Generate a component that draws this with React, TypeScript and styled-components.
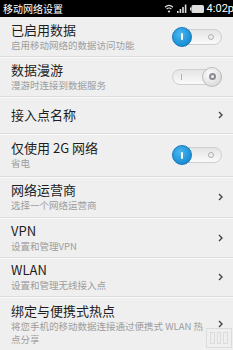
import React from 'react'
import styled, { createGlobalStyle } from 'styled-components'

const GlobalStyle = createGlobalStyle`
  html, body {
    margin: 0;
    padding: 0;
    background: #efefef;
  }
  body {
    font-family: 'Noto Sans CJK SC', 'Noto Sans', sans-serif;
  }
`

const Screen = styled.div`
  width: 233px;
  height: 350px;
  overflow: hidden;
  background: #efefef;
  position: relative;
`

const StatusBar = styled.div`
  height: 17px;
  background: #000;
  display: flex;
  align-items: center;
  padding: 0 0 0 3px;
  color: #fff;
`

const BarTitle = styled.div`
  font-size: 10px;
  line-height: 17px;
  flex: 1;
  white-space: nowrap;
`

const BarIcons = styled.div`
  display: flex;
  align-items: center;
  gap: 3px;
`

const Clock = styled.div`
  font-family: 'Roboto', 'Liberation Sans', sans-serif;
  font-size: 11px;
  white-space: nowrap;
  margin-right: -1px;
`

const Row = styled.div<{ h: number }>`
  height: ${({ h }) => h}px;
  box-sizing: border-box;
  display: flex;
  align-items: center;
  padding: 0 10px 0 11px;
  border-bottom: 1px solid #dcdcdc;
  box-shadow: 0 1px 0 #fafafa;
`

const Texts = styled.div`
  flex: 1;
  min-width: 0;
`

const Title = styled.div`
  font-size: 13px;
  line-height: 16px;
  color: #1e1e1e;
  white-space: nowrap;
`

const Sub = styled.div`
  font-size: 9.5px;
  line-height: 13px;
  color: #9d9d9d;
  margin-top: 1px;
`

const Chevron = styled.div`
  width: 10px;
  display: flex;
  justify-content: flex-end;
  margin-left: 4px;
`

const Track = styled.div`
  width: 50px;
  height: 16px;
  border-radius: 8px;
  background: linear-gradient(#e4e4e4, #fafafa);
  border: 1px solid #cfcfcf;
  box-sizing: border-box;
  position: relative;
  margin-right: 1px;
`

const Knob = styled.div<{ on: boolean }>`
  position: absolute;
  top: -3px;
  ${({ on }) => (on ? 'left: -1px;' : 'right: -1px;')}
  width: 20px;
  height: 20px;
  border-radius: 50%;
  background: ${({ on }) =>
    on
      ? 'radial-gradient(circle at 40% 35%, #4ab8f0, #1a8fd6 70%, #1379bd)'
      : 'radial-gradient(circle at 40% 35%, #fdfdfd, #dedede 70%, #c6c6c6)'};
  border: 1px solid ${({ on }) => (on ? '#1678b8' : '#bdbdbd')};
  box-sizing: border-box;
  display: flex;
  align-items: center;
  justify-content: center;
`

const KnobBar = styled.div`
  width: 2px;
  height: 7px;
  background: #fff;
  border-radius: 1px;
`

const KnobRing = styled.div`
  width: 7px;
  height: 7px;
  border-radius: 50%;
  border: 2px solid #8a8a92;
  box-sizing: border-box;
`

const TrackMark = styled.div<{ side: 'left' | 'right' }>`
  position: absolute;
  top: 4px;
  ${({ side }) => (side === 'left' ? 'left: 8px;' : 'right: 7px;')}
  ${({ side }) =>
    side === 'left'
      ? 'width: 1px; height: 6px; background: #b0b0b0;'
      : 'width: 6px; height: 6px; border-radius: 50%; border: 1px solid #b0b0b0; box-sizing: border-box;'}
`

const Watermark = styled.div`
  position: absolute;
  right: 1px;
  bottom: 2px;
  width: 26px;
  height: 20px;
  border: 1px solid #d8d8d8;
  box-sizing: border-box;
  display: flex;
  gap: 2px;
  padding: 3px;
  opacity: 0.8;
`

const WmCell = styled.div`
  flex: 1;
  border: 1px solid #d8d8d8;
`

const Toggle = ({ on }: { on: boolean }) => (
  <Track>
    <TrackMark side={on ? 'right' : 'left'} />
    <Knob on={on}>{on ? <KnobBar /> : <KnobRing />}</Knob>
  </Track>
)

const Arrow = () => (
  <Chevron>
    <svg width="5" height="8" viewBox="0 0 5 8">
      <path d="M1 1 L4 4 L1 7" fill="none" stroke="#444" strokeWidth="1.4" />
    </svg>
  </Chevron>
)

const Wifi = () => (
  <svg width="10" height="9" viewBox="0 0 10 9">
    <path d="M1 3.2 Q5 -0.4 9 3.2" fill="none" stroke="#ddd" strokeWidth="1.2" />
    <path d="M2.6 5 Q5 3 7.4 5" fill="none" stroke="#ddd" strokeWidth="1.2" />
    <circle cx="5" cy="7.5" r="1.1" fill="#ddd" />
  </svg>
)

const Signal = () => (
  <svg width="10" height="9" viewBox="0 0 10 9">
    <rect x="0" y="7" width="1.6" height="2" fill="#ddd" />
    <rect x="2.6" y="5" width="1.6" height="4" fill="#ddd" />
    <rect x="5.2" y="3" width="1.6" height="6" fill="#ddd" />
    <rect x="7.8" y="0.5" width="1.6" height="8.5" fill="#ddd" />
  </svg>
)

const Battery = () => (
  <svg width="14" height="8" viewBox="0 0 14 8">
    <rect x="1.5" y="0" width="12.5" height="8" rx="1.5" fill="#ddd" />
    <rect x="0" y="2.5" width="1.5" height="3" fill="#ddd" />
  </svg>
)

type Item = {
  title: string
  sub?: string
  h: number
  toggle?: boolean
}

const items: Item[] = [
  { title: '已启用数据', sub: '启用移动网络的数据访问功能', h: 40, toggle: true },
  { title: '数据漫游', sub: '漫游时连接到数据服务', h: 40, toggle: false },
  { title: '接入点名称', h: 37 },
  { title: '仅使用 2G 网络', sub: '省电', h: 43, toggle: true },
  { title: '网络运营商', sub: '选择一个网络运营商', h: 41 },
  { title: 'VPN', sub: '设置和管理VPN', h: 40 },
  { title: 'WLAN', sub: '设置和管理无线接入点', h: 39 },
  { title: '绑定与便携式热点', sub: '将您手机的移动数据连接通过便携式 WLAN 热点分享', h: 55 },
]

const App = () => {
  return (
    <Screen>
      <GlobalStyle />
      <StatusBar>
        <BarTitle>移动网络设置</BarTitle>
        <BarIcons>
          <Wifi />
          <Signal />
          <Battery />
          <Clock>4:02p</Clock>
        </BarIcons>
      </StatusBar>
      {items.map((item, index) => (
        <Row key={index} h={item.h}>
          <Texts>
            <Title>{item.title}</Title>
            {item.sub && <Sub>{item.sub}</Sub>}
          </Texts>
          {item.toggle === undefined ? <Arrow /> : <Toggle on={item.toggle} />}
        </Row>
      ))}
      <Watermark>
        <WmCell />
        <WmCell />
        <WmCell />
      </Watermark>
    </Screen>
  )
}

export default App
